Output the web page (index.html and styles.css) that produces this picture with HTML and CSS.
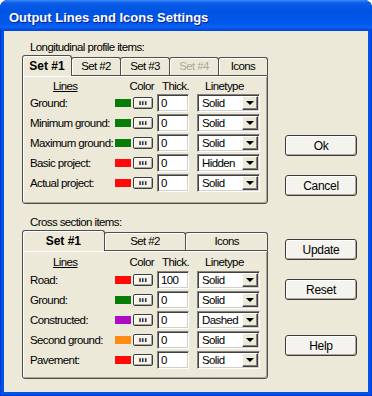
FILE: index.html
```html
<!DOCTYPE html>
<html lang="en">
<head>
  <meta charset="UTF-8">
  <title>Output Lines and Icons Settings</title>
  <link rel="stylesheet" href="styles.css">
</head>
<body>
  <!-- Dialog window -->
  <div class="window">
    <div class="titlebar">Output Lines and Icons Settings</div>
    <div class="client">
      <div class="groups">
        <!-- Longitudinal profile -->
        <div class="group">
          <div class="group-label">Longitudinal profile items:</div>
          <div class="tabs">
            <div class="tab active">Set #1</div>
            <div class="tab">Set #2</div>
            <div class="tab">Set #3</div>
            <div class="tab disabled">Set #4</div>
            <div class="tab">Icons</div>
          </div>
          <div class="pane pane-long">
            <div class="row head">
              <span class="hd-lines">Lines</span>
              <span class="hd-color">Color</span>
              <span class="hd-thick">Thick.</span>
              <span class="hd-type">Linetype</span>
            </div>
            <div class="row">
              <span class="name">Ground:</span>
              <span class="swatch green"></span>
              <span class="pick">ııı</span>
              <span class="textbox">0</span>
              <span class="combo"><span class="combo-text">Solid</span><span class="drop"></span></span>
            </div>
            <div class="row">
              <span class="name">Minimum ground:</span>
              <span class="swatch green"></span>
              <span class="pick">ııı</span>
              <span class="textbox">0</span>
              <span class="combo"><span class="combo-text">Solid</span><span class="drop"></span></span>
            </div>
            <div class="row">
              <span class="name">Maximum ground:</span>
              <span class="swatch green"></span>
              <span class="pick">ııı</span>
              <span class="textbox">0</span>
              <span class="combo"><span class="combo-text">Solid</span><span class="drop"></span></span>
            </div>
            <div class="row">
              <span class="name">Basic project:</span>
              <span class="swatch red"></span>
              <span class="pick">ııı</span>
              <span class="textbox">0</span>
              <span class="combo"><span class="combo-text">Hidden</span><span class="drop"></span></span>
            </div>
            <div class="row">
              <span class="name">Actual project:</span>
              <span class="swatch red"></span>
              <span class="pick">ııı</span>
              <span class="textbox">0</span>
              <span class="combo"><span class="combo-text">Solid</span><span class="drop"></span></span>
            </div>
          </div>
        </div>

        <!-- Cross section -->
        <div class="group group-cross">
          <div class="group-label">Cross section items:</div>
          <div class="tabs">
            <div class="tab active">Set #1</div>
            <div class="tab">Set #2</div>
            <div class="tab">Icons</div>
          </div>
          <div class="pane pane-cross">
            <div class="row head">
              <span class="hd-lines">Lines</span>
              <span class="hd-color">Color</span>
              <span class="hd-thick">Thick.</span>
              <span class="hd-type">Linetype</span>
            </div>
            <div class="row">
              <span class="name">Road:</span>
              <span class="swatch red"></span>
              <span class="pick">ııı</span>
              <span class="textbox">100</span>
              <span class="combo"><span class="combo-text">Solid</span><span class="drop"></span></span>
            </div>
            <div class="row">
              <span class="name">Ground:</span>
              <span class="swatch green"></span>
              <span class="pick">ııı</span>
              <span class="textbox">0</span>
              <span class="combo"><span class="combo-text">Solid</span><span class="drop"></span></span>
            </div>
            <div class="row">
              <span class="name">Constructed:</span>
              <span class="swatch purple"></span>
              <span class="pick">ııı</span>
              <span class="textbox">0</span>
              <span class="combo"><span class="combo-text">Dashed</span><span class="drop"></span></span>
            </div>
            <div class="row">
              <span class="name">Second ground:</span>
              <span class="swatch orange"></span>
              <span class="pick">ııı</span>
              <span class="textbox">0</span>
              <span class="combo"><span class="combo-text">Solid</span><span class="drop"></span></span>
            </div>
            <div class="row">
              <span class="name">Pavement:</span>
              <span class="swatch red"></span>
              <span class="pick">ııı</span>
              <span class="textbox">0</span>
              <span class="combo"><span class="combo-text">Solid</span><span class="drop"></span></span>
            </div>
          </div>
        </div>
      </div>

      <!-- Dialog buttons -->
      <div class="buttons">
        <button class="btn">Ok</button>
        <button class="btn">Cancel</button>
        <button class="btn btn-update">Update</button>
        <button class="btn">Reset</button>
        <button class="btn btn-help">Help</button>
      </div>
    </div>
  </div>
</body>
</html>
```

FILE: styles.css
```css
/* General */
* {
  box-sizing: border-box;
}

body {
  margin: 0;
  background: #fff;
  font-family: "Liberation Sans", Arial, sans-serif;
  font-size: 11.5px;
  letter-spacing: -0.6px;
  color: #000;
}

/* Window frame */
.window {
  width: 372px;
  height: 396px;
  display: flex;
  flex-direction: column;
  background: #0055e5;
  border-radius: 8px 8px 0 0;
  box-shadow: inset 0 0 0 1px #0831d9;
  overflow: hidden;
}

.titlebar {
  height: 31px;
  padding: 10px 0 0 9px;
  line-height: 16px;
  font-weight: bold;
  font-size: 13px;
  letter-spacing: 0;
  color: #fff;
  text-shadow: 1px 1px 0 #0f1b8c;
  background: linear-gradient(to bottom, #3d8af7 0%, #0a5ce8 10%, #0054e3 35%, #0058eb 75%, #0a61f5 88%, #0043cf 100%);
}

.client {
  flex: 1;
  display: flex;
  margin: 0 4px 4px 4px;
  background: #ece9d8;
}

/* Groups with tab controls */
.groups {
  padding: 9px 0 0 18px;
  width: 264px;
}

.group-cross {
  margin-top: 11px;
}

.group-label {
  padding-left: 8px;
  height: 14px;
  line-height: 15px;
}

.tabs {
  display: flex;
  align-items: flex-end;
  height: 20px;
  margin-top: 1px;
}

.tab {
  flex: 1;
  height: 18px;
  border: 1px solid #4e4e4e;
  border-bottom: none;
  border-radius: 3px 3px 0 0;
  box-shadow: inset 1px 1px 0 #fff;
  background: #ece9d8;
  text-align: center;
  line-height: 17px;
}

.tab + .tab {
  margin-left: -1px;
}

.tab.active {
  height: 21px;
  margin-bottom: -1px;
  padding-top: 2px;
  font-size: 12px;
  font-weight: bold;
  letter-spacing: 0;
  position: relative;
  z-index: 1;
}

.tab.disabled {
  color: #aca899;
}

.pane {
  height: 129px;
  border: 1px solid #4e4e4e;
  border-radius: 0 0 3px 3px;
  box-shadow: inset 1px 1px 0 #fff, inset -1px -1px 0 #aca899;
  padding-left: 7px;
}

.pane-long {
  padding-top: 3px;
}

.pane-cross {
  padding-top: 4px;
}

/* Rows */
.row {
  display: grid;
  grid-template-columns: 85px 18px 24px 40px 63px;
  align-items: center;
  height: 20px;
}

.row.head {
  height: 14px;
  line-height: 15px;
}

.pane-cross .row.head {
  margin-bottom: 1px;
}

.hd-lines {
  padding-left: 23px;
  text-decoration: underline;
}

.hd-color {
  grid-column: 2 / 4;
  text-align: right;
  padding-right: 3px;
}

.hd-thick {
  padding-left: 5px;
}

.hd-type {
  padding-left: 8px;
  white-space: nowrap;
}

.name {
  white-space: nowrap;
}

.swatch {
  width: 16px;
  height: 8px;
}

.green { background: #087c08; }
.red { background: #ff0a0a; }
.purple { background: #b00cc4; }
.orange { background: #ff8a14; }

.pick {
  width: 20px;
  height: 12px;
  border: 1px solid #3c3c3c;
  border-radius: 2px;
  background: #f4f3ee;
  box-shadow: inset 1px 1px 0 #fff, inset -1px -1px 0 #aca899;
  font-family: "DejaVu Sans", sans-serif;
  font-weight: bold;
  font-size: 7px;
  line-height: 10px;
  text-align: center;
  letter-spacing: 0.5px;
}

.textbox {
  width: 32px;
  height: 18px;
  background: #fff;
  border: 1px solid;
  border-color: #808080 #fff #fff #808080;
  box-shadow: inset 1px 1px 0 #404040, inset -1px -1px 0 #d4d0c8;
  padding-left: 3px;
  line-height: 17px;
}

.combo {
  width: 63px;
  height: 18px;
  display: flex;
  background: #fff;
  border: 1px solid;
  border-color: #808080 #fff #fff #808080;
  box-shadow: inset 1px 1px 0 #404040, inset -1px -1px 0 #d4d0c8;
  padding: 1px 1px 1px 0;
}

.combo-text {
  flex: 1;
  padding-left: 4px;
  line-height: 15px;
  white-space: nowrap;
  overflow: hidden;
}

.drop {
  width: 16px;
  height: 14px;
  flex: none;
  display: flex;
  align-items: center;
  justify-content: center;
  background: #ece9d8;
  border: 1px solid;
  border-color: #fff #404040 #404040 #fff;
  box-shadow: inset -1px -1px 0 #808080;
}

.drop::after {
  content: "";
  border-left: 4px solid transparent;
  border-right: 4px solid transparent;
  border-top: 4px solid #000;
}

/* Right buttons */
.buttons {
  display: flex;
  flex-direction: column;
  padding: 104px 0 0 17px;
}

.btn {
  width: 72px;
  height: 21px;
  margin: 0 0 19px 0;
  padding: 0;
  border: 1px solid #3c3c3c;
  border-radius: 3px;
  background: #f4f3ee;
  box-shadow: inset 1px 1px 0 #fff, inset -1px -1px 0 #aca899;
  font-family: inherit;
  font-size: 12px;
  letter-spacing: -0.3px;
  color: #000;
}

.btn-update {
  margin-top: 24px;
}

.btn-help {
  margin-top: 16px;
}
```
